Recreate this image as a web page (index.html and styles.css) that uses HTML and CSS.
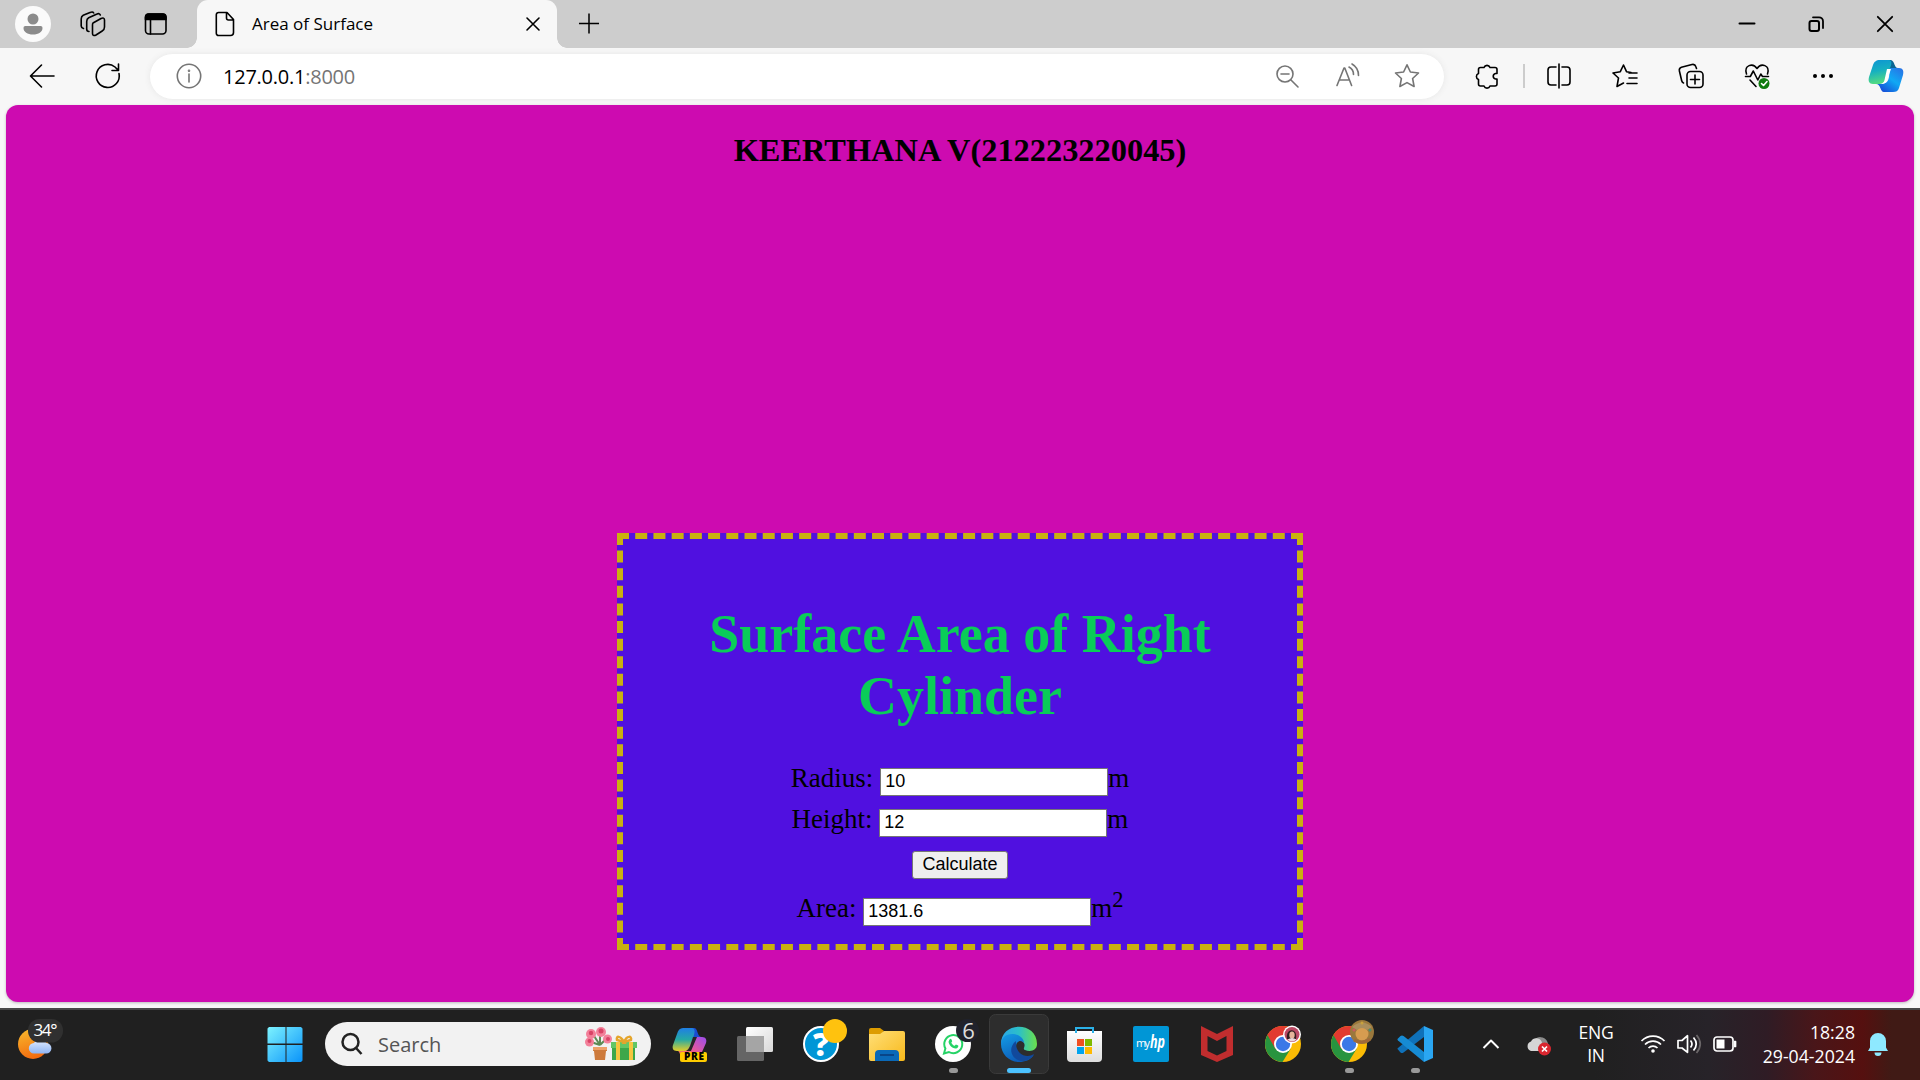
FILE: index.html
```html
<!DOCTYPE html>
<html lang="en">
<head>
<meta charset="utf-8">
<title>Area of Surface</title>
<link rel="stylesheet" href="styles.css">
</head>
<body>
<header class="tabstrip">
  <div class="tab-tools">
    <svg class="profile" viewBox="0 0 36 36"><circle cx="18" cy="18" r="18" fill="#fafafa"/><circle cx="18" cy="13" r="5.5" fill="#8b8b8b"/><path d="M10 20h16a1.8 1.8 0 0 1 1.5 2c0 4-4 6.500-9.500 6.500S8.500 26 8.500 22a1.800 1.800 0 0 1 1.500-2z" fill="#8b8b8b"/></svg>
    <svg class="icon workspaces" viewBox="0 0 26 26"><path d="M13 12l8-4.500c2-1 3.500-.5 3.500 1.500v7c0 2-.8 3.200-2.300 4L16 24c-2 1-3.500.5-3.500-1.500v-8.500c0-1 0-1.500.5-2zM9 20.500c-1.500 0-2.300-.8-2.300-2.500v-7.500c0-2 .5-2.800 2-3.700L17 3c1.500-.8 2.800-.4 3.300 1M3.500 17.500C2 17 1.200 16.300 1.200 15V8c0-2 .6-3 2-3.700L10 1.500c2-.8 3.200-.5 3.700.5"/></svg>
    <svg class="icon tab-actions" viewBox="0 0 24 24"><rect x="1.500" y="2" width="20.500" height="20" rx="3.500"/><path d="M6.500 7v15"/><path d="M1.500 7.500V5A3 3 0 0 1 4.500 2H19a3 3 0 0 1 3 3v2.500z" fill="#000"/></svg>
  </div>
  <div class="tab">
    <svg class="icon page-icon" viewBox="0 0 20 26"><path d="M3.500 1.500h8.500l6.500 7v13a3 3 0 0 1-3 3h-12a2.200 2.200 0 0 1-2.200-2.200V3.700a2.200 2.200 0 0 1 2.200-2.200zM11.500 1.500V7a2 2 0 0 0 2 2h5"/></svg>
    <span class="tab-title">Area of Surface</span>
    <svg class="icon tab-close" viewBox="0 0 14 14"><path d="M1 1l12 12M13 1L1 13"/></svg>
  </div>
  <svg class="icon new-tab" viewBox="0 0 22 22"><path d="M11 0.500v21M.5 11h21"/></svg>
  <div class="window-buttons">
    <svg class="icon" viewBox="0 0 16 16"><path d="M.5 7.500h15" stroke-width="2"/></svg>
    <svg class="icon" viewBox="0 0 16 16"><rect x="1.500" y="5" width="9.500" height="10" rx="2" stroke-width="2"/><path d="M5 1.300h6a4 4 0 0 1 4 4V12" stroke-width="1.800"/></svg>
    <svg class="icon" viewBox="0 0 16 16"><path d="M.8.8l14.400 14.400M15.200.8L.8 15.200" stroke-width="1.800"/></svg>
  </div>
</header>
<nav class="toolbar">
  <div class="nav-cell"><svg class="icon" viewBox="0 0 26 26"><path d="M25 13H2M12.500 2L1.500 13l11 11"/></svg></div>
  <div class="nav-cell"><svg class="icon" viewBox="0 0 26 26"><path d="M24 10.500A11.500 11.500 0 1 1 20 4l3 3M23.500 1v6.500H17"/></svg></div>
  <div class="address">
    <svg class="icon gray" viewBox="0 0 26 26"><circle cx="13" cy="13" r="11.700"/><path d="M13 11v8"/><circle cx="13" cy="7.700" r=".5"/></svg>
    <span class="url">127.0.0.1<span class="port">:8000</span></span>
    <svg class="icon gray zoom-out" viewBox="0 0 26 26"><circle cx="11" cy="11" r="8"/><path d="M17 17l7 7M7 11h8"/></svg>
    <svg class="icon gray read" viewBox="0 0 26 26"><path d="M2 22.500L9 5h.8l6.800 17.500M4.500 17h10M14 4c3 1.500 4.500 4 4.500 7.500M17 1c4.500 2.500 6.500 6 6.500 11.500"/></svg>
    <svg class="icon gray star" viewBox="0 0 26 26"><path d="M13 1.800l3.400 7.200 8.100 1-5.900 5.500 1.500 8L13 19.600l-7.100 3.900 1.500-8L1.500 10l8.100-1z"/></svg>
  </div>
  <div class="nav-cell puzzle"><svg class="icon" viewBox="0 0 26 26"><path d="M6.500 4.500H10a3.200 3.200 0 0 1 6 0h5a2 2 0 0 1 2 2v4h-1.500a2.800 2.800 0 0 0 0 5.500H23v5a2 2 0 0 1-2 2h-5a3.200 3.200 0 0 1-6 0H6.500a2 2 0 0 1-2-2v-4.500a3.200 3.200 0 0 1 0-6V6.500a2 2 0 0 1 2-2"/></svg></div>
  <i class="divider"></i>
  <div class="nav-cell"><svg class="icon" viewBox="0 0 26 26"><path d="M10 4H5a3 3 0 0 0-3 3v12a3 3 0 0 0 3 3h5M16 4h5a3 3 0 0 1 3 3v12a3 3 0 0 1-3 3h-5M13 1v24"/></svg></div>
  <div class="nav-cell"><svg class="icon" viewBox="0 0 26 26"><path d="M19 9.500l-4.500-.8L11.500 2 8.300 8.700 1 10l5.500 5-1.500 8.500 6.500-3.500M17 10h8M17 15h8M15 20.500h10"/></svg></div>
  <div class="nav-cell"><svg class="icon" viewBox="0 0 26 26"><rect x="9" y="8.500" width="16" height="16" rx="3.500"/><path d="M17 12v9M12.500 16.500h9M5.500 20c-1-.3-1.500-1-1.800-2.200L1.400 8c-.4-2 .4-3.300 2-3.800L14 1.500c2-.4 3.300.4 3.800 2L18.500 5.500"/></svg></div>
  <div class="nav-cell"><svg class="icon" viewBox="0 0 26 26"><path d="M2.500 11C-.5 2 9-.5 13 5.500 17-.5 26.500 2 23.500 11M1.500 13.500h4.800l3-5.500 4.500 9 3-6 1.700 2.500h6M6 17l6 6.500"/><circle cx="20" cy="20.500" r="5.500" fill="#107c10" stroke="none"/><path d="M17.500 20.500l2 2 3.500-4" stroke="#fff"/></svg></div>
  <div class="nav-cell"><svg class="icon" viewBox="0 0 26 26"><g fill="#000" stroke="none"><circle cx="5" cy="13" r="2"/><circle cx="13" cy="13" r="2"/><circle cx="21" cy="13" r="2"/></g></svg></div>
  <div class="nav-cell copilot"><svg viewBox="0 0 36 32">
    <defs>
      <linearGradient id="cpA" x1="0" y1="0" x2=".2" y2="1"><stop offset="0" stop-color="#0d93d4"/><stop offset=".5" stop-color="#16b0c0"/><stop offset="1" stop-color="#52da83"/></linearGradient>
      <linearGradient id="cpB" x1="1" y1="0" x2=".2" y2="1"><stop offset="0" stop-color="#2a6ee4"/><stop offset=".5" stop-color="#10a9f4"/><stop offset="1" stop-color="#1648d6"/></linearGradient>
    </defs>
    <path d="M14 0h9c4 1 3 8 7 8l-9 3z" fill="#0b6592"/>
    <path d="M22 8h9c4 0 5 3 4 7l-4 13c-1 3-3 4-6 4h-9c-4 0-3-8-8-8l8-1c3 0 4-2 5-6z" fill="url(#cpB)"/>
    <path d="M12 0h9c3 0 3 4 1 8l-4 12c-1 3-3 4-6 4H5c-4 0-5-3-4-7L5 5c1-3 3-5 7-5z" fill="url(#cpA)"/>
    <path d="M19 9h4l-4 11c-.8 2.500-2 4-5 4h-2c3-.5 4-2 4.500-4z" fill="#fff"/>
  </svg></div>
</nav>

<main class="page">
  <h2 class="author">KEERTHANA V(212223220045)</h2>
  <section class="box">
    <h1 class="box-title">Surface Area of Right Cylinder</h1>
    <form class="calc">
      <div class="row">Radius: <input type="text" value="10">m</div>
      <div class="row">Height: <input type="text" value="12">m</div>
      <div class="row button-row"><input type="button" value="Calculate"></div>
      <div class="row area-row">Area: <input type="text" value="1381.6">m<sup>2</sup></div>
    </form>
  </section>
</main>

<footer class="taskbar">
  <svg class="weather" viewBox="0 0 66 70">
    <defs><linearGradient id="sun" x1=".3" y1="0" x2=".6" y2="1"><stop offset="0" stop-color="#f8b52b"/><stop offset="1" stop-color="#f2680e"/></linearGradient>
    <linearGradient id="cld" x1="0" y1="0" x2="0" y2="1"><stop offset="0" stop-color="#e3edff"/><stop offset="1" stop-color="#8fb5f3"/></linearGradient></defs>
    <circle cx="33" cy="34" r="15" fill="url(#sun)"/>
    <path d="M34 43.500a5.200 5.200 0 0 1 0-10.400 7 7 0 0 1 12.500 0A5.200 5.200 0 0 1 46 43.500z" fill="url(#cld)"/>
    <rect x="28" y="9" width="35" height="23.500" rx="11.500" fill="#303030"/>
    <text x="33.500" y="26" class="temp" textLength="24">34°</text>
  </svg>
  <svg class="start" viewBox="0 0 66 70"><defs><linearGradient id="win" x1="0" y1="0" x2="1" y2="1"><stop offset="0" stop-color="#7df3ff"/><stop offset="1" stop-color="#0a93f9"/></linearGradient></defs><path fill="url(#win)" d="M17 17h16.500v16.500H15.500V18.500zM34.500 17H49l1.500 1.500v15h-16zM15.500 35h18v17H17l-1.500-1.500zM34.500 35h16v15.500L49 52H34.500z"/></svg>
  <div class="search">
    <svg class="mag" viewBox="0 0 24 24"><circle cx="10.500" cy="10" r="8"/><path d="M16 16l5.500 6"/></svg>
    <span class="search-label">Search</span>
    <svg class="gift" viewBox="0 0 52 34">
      <path d="M15 18L9 9M15 18V6M15 18l7-7M15 18L6 15" stroke="#5c8a54" stroke-width="2"/>
      <g fill="#f3809a"><circle cx="6" cy="7" r="5"/><circle cx="16" cy="5" r="5"/><circle cx="22.500" cy="12" r="4.500"/><circle cx="4.500" cy="15" r="4.500"/></g>
      <g fill="#d94367"><circle cx="6" cy="6" r="2.200"/><circle cx="16" cy="4" r="2.500"/><circle cx="23" cy="12" r="2"/><circle cx="4.500" cy="14" r="2"/></g>
      <path d="M8 20h14v4h-1l-1 9H10L9 24H8z" fill="#cd7a3b"/><path d="M8 20h14v3H8z" fill="#eda168"/>
      <rect x="27" y="20" width="23" height="13" fill="#3da74a"/><rect x="26" y="15" width="26" height="6" fill="#62c666"/>
      <path d="M31 15h4v18h-4zM44 15h4v18h-4z" fill="#f6c63f"/><path d="M39 15c-4-7-8-6-7-2zM39 15c3-7 8-6 7-2z" fill="none" stroke="#e5a52c" stroke-width="2.500"/>
    </svg>
  </div>
  <div class="apps">
    <svg viewBox="0 0 66 70"><defs><linearGradient id="pa" x1="0" y1="0" x2="0" y2="1"><stop offset="0" stop-color="#1f7ee5"/><stop offset=".5" stop-color="#25a9a5"/><stop offset="1" stop-color="#e5ce27"/></linearGradient><linearGradient id="pb" x1="1" y1="0" x2="0" y2="1"><stop offset="0" stop-color="#9a4df0"/><stop offset=".6" stop-color="#ed5a91"/><stop offset="1" stop-color="#f78b3a"/></linearGradient></defs>
      <path d="M30 18h8c4 0 3 8 7 9l-9 3z" fill="#1a4bd0"/><path d="M37 27h9c4 0 5 3 4 6l-4 9c-1 3-3 5-7 5H27c-3 0-3-5-5-6h4c4 0 5-2 6-5z" fill="url(#pb)"/><path d="M27 18h9c3 0 3 4 2 7l-4 11c-1 3-3 5-6 5h-7c-4 0-5-3-4-6l4-11c1-4 3-6 6-6z" fill="url(#pa)"/><path d="M37 27l4 0-6 14h-5c2-1 3-3 4-5z" fill="#262626"/>
      <rect x="24" y="42" width="27" height="10" rx="2" fill="#fc0"/><text x="28" y="50.400" class="pre" textLength="20">PRE</text></svg>
    <svg viewBox="0 0 66 70"><defs><linearGradient id="tv" x1="0" y1="0" x2="1" y2="1"><stop offset="0" stop-color="#fff"/><stop offset="1" stop-color="#d8d8d8"/></linearGradient></defs><rect x="24" y="17" width="27" height="25" rx="1.500" fill="url(#tv)"/><rect x="15" y="26" width="27" height="25" rx="1.500" fill="#777" fill-opacity=".8"/><path d="M24 26h18v16H24z" fill="#a5a5a5"/></svg>
    <svg viewBox="0 0 66 70"><circle cx="33" cy="34" r="17" fill="#0096d6" stroke="#fff" stroke-width="2"/><text x="33" y="46" class="question">?</text><circle cx="47" cy="21" r="12" fill="#ffc20e"/></svg>
    <svg viewBox="0 0 66 70"><defs><linearGradient id="fd" x1="0" y1="0" x2="1" y2="1"><stop offset="0" stop-color="#ffdf78"/><stop offset="1" stop-color="#f8b91b"/></linearGradient></defs><path d="M15 20a2 2 0 0 1 2-2h9l4 3-3 4H15z" fill="#dd9c00"/><path d="M15 24h11l4-3h19a2 2 0 0 1 2 2v26a2 2 0 0 1-2 2H17a2 2 0 0 1-2-2z" fill="url(#fd)"/><path d="M21 51v-7a4 4 0 0 1 4-4h16a4 4 0 0 1 4 4v7z" fill="#0a69b8"/><path d="M26 45h14" stroke="#0a3f80" stroke-width="1.700"/></svg>
    <svg viewBox="0 0 66 70"><circle cx="33" cy="34" r="18" fill="#fff"/><path d="M24 43.500l1.400-5a9 9 0 1 1 3.500 3.500z" fill="none" stroke="#25d366" stroke-width="2"/><path d="M29.500 29.500c.8-1 1.700-.8 2 0l.7 1.800-.9 1.400c.8 1.600 2 2.600 3.400 3.100l1.200-1.200 2.300 1c.5.700-.2 2.500-2 2.900-4 .5-8-4.500-7.600-7z" fill="#25d366"/><circle cx="47.500" cy="20.500" r="11.500" fill="#20222c"/><text x="48.500" y="28.500" class="count">6</text><rect x="29" y="58" width="9" height="5" rx="2.500" fill="#999"/></svg>
    <svg viewBox="0 0 66 70"><defs><linearGradient id="ea" x1="0" y1=".5" x2="1" y2=".5"><stop offset="0" stop-color="#2aa5e8"/><stop offset=".5" stop-color="#2cc0c8"/><stop offset="1" stop-color="#6be04a"/></linearGradient><linearGradient id="eb" x1="0" y1="0" x2=".5" y2="1"><stop offset="0" stop-color="#149de6"/><stop offset="1" stop-color="#0c59b5"/></linearGradient></defs><rect x="3.500" y="4.500" width="59" height="59" rx="6" fill="#2d2d2d" stroke="#3a3a3a"/>
      <path d="M15 34c0-23 36-23 36 0 0 7-7 8-12 6-3-1 1-3-1-7-3-6-18-6-23 1z" fill="url(#ea)"/><path d="M15 34c0-6 5-10 11-10 8 0 12 5 12 9-3-4-8-2-8 4 0 7 9 15 18 8-4 5-9 7-15 7-10 0-18-8-18-18z" fill="url(#eb)"/><path d="M30 31c-10 8-3 21 8 20 5-1 9-4 10-7-8 5-19 0-18-13z" fill="#11499c"/><rect x="21" y="58" width="24" height="5" rx="2.500" fill="#4cc2ff"/></svg>
    <svg viewBox="0 0 66 70"><defs><linearGradient id="st" x1="0" y1="0" x2="0" y2="1"><stop offset="0" stop-color="#fff"/><stop offset="1" stop-color="#ddd"/></linearGradient></defs><path d="M15 21h35v27a4 4 0 0 1-4 4H19a4 4 0 0 1-4-4z" fill="url(#st)"/><path d="M24 23v-5h17v5" fill="none" stroke="#2bb1e8" stroke-width="2"/><path d="M25 29h7v7h-7z" fill="#f25022"/><path d="M33 29h7v7h-7z" fill="#7fba00"/><path d="M25 37h7v7h-7z" fill="#00a4ef"/><path d="M33 37h7v7h-7z" fill="#ffb900"/></svg>
    <svg viewBox="0 0 66 70"><rect x="15" y="16" width="36" height="36" rx="2" fill="#0096d6"/><text x="18" y="36.500" class="my" textLength="14">my</text><text x="32" y="38" class="hp" textLength="15" lengthAdjust="spacingAndGlyphs">hp</text></svg>
    <svg viewBox="0 0 66 70"><path d="M17 16l16 8 16-8v29l-16 7-16-7zM23.500 26v15l9.500 4.500 9.500-4.500V26L33 31z" fill="#c12d2e" fill-rule="evenodd"/></svg>
    <svg viewBox="0 0 66 70"><g id="chrome"><circle cx="33" cy="34" r="18" fill="#fbbc05"/><path d="M33 34L17.500 25A18 18 0 0 0 32.500 52l8-13z" fill="#28943f"/><path d="M17.400 25A18 18 0 0 1 48.600 25H33l-7.500 14z" fill="#e23a30"/><circle cx="33" cy="34" r="9" fill="#fff"/><circle cx="33" cy="34" r="7.200" fill="#3b78e7"/></g><circle cx="42" cy="24.500" r="9" fill="#fff"/><circle cx="42" cy="24.500" r="7.500" fill="#ba4964"/><path d="M37 29c-2-11 11-12 9 0z" fill="#321e20"/><ellipse cx="42" cy="25" rx="2.700" ry="3.500" fill="#e5b49b"/><path d="M37.500 29.500q4.500-3 9 0-4.500 4-9 0z" fill="#e9d9dc"/></svg>
    <svg viewBox="0 0 66 70"><use href="#chrome"/><circle cx="46" cy="22" r="12" fill="#9a783c"/><circle cx="46" cy="24" r="6.500" fill="#d79c50"/><path d="M36 17q10-9 20 0l-5 3q-5-4-10 0z" fill="#aa8e5c"/><path d="M38 30q8 5 16-1" stroke="#a0693a" stroke-width="3" fill="none"/><circle cx="38" cy="20" r="1.500" fill="#c95a60"/><circle cx="54" cy="20" r="1.500" fill="#4a8c74"/><circle cx="46" cy="13" r="1.500" fill="#c9a23c"/></svg>
    <svg viewBox="0 0 66 70"><path d="M15.500 39l3 3.500c1 .7 2 .7 3 0L42 27V16L16 38c-.5.500-.7.700-.5 1z" fill="#0f71b9"/><path d="M15.500 29l3-3c1-.7 2-.7 3 0L42 42v10L16 30.500c-.5-.5-.7-1-.5-1.500z" fill="#168bd4"/><path d="M42 16l9 4v28l-9 4z" fill="#2aa6f2"/><rect x="29" y="58" width="9" height="5" rx="2.500" fill="#999"/><rect x="-37" y="58" width="9" height="5" rx="2.500" fill="#999"/></svg>
  </div>
  <div class="tray">
    <svg class="tray-icon chevron" viewBox="0 0 24 24"><path d="M4.500 16L12 8.500l7.500 7.500" stroke-width="2"/></svg>
    <svg class="tray-icon cloud" viewBox="0 0 26 26"><path d="M8 9a8 8 0 0 1 13 1l2 5H8z" fill="#8b8b8b" stroke="none"/><path d="M5 20a5 5 0 0 1 0-9.500 6 6 0 0 1 11 1L14 20z" fill="#d5d5d5" stroke="none"/><circle cx="18.500" cy="18" r="6.500" fill="#d9262f" stroke="none"/><path d="M16 15.500l5 5M21 15.500l-5 5" stroke-width="1.700"/></svg>
    <div class="lang">ENG<br>IN</div>
    <svg class="tray-icon wifi" viewBox="0 0 26 26"><path d="M1.500 10a16 16 0 0 1 23 0M5 13.500a11.300 11.300 0 0 1 16 0M8.500 17a6.500 6.500 0 0 1 9 0"/><circle cx="13" cy="20" r="1.800" fill="#fff" stroke="none"/></svg>
    <svg class="tray-icon" viewBox="0 0 26 26"><path d="M2 9.500h4l5.500-4.800v16.600L6 17H2zM14.500 9.500q3 3.500 0 7M17.500 6.500q5.500 6.500 0 13"/><path d="M20.500 4q7.500 9 0 18" stroke="#6a6668"/></svg>
    <svg class="tray-icon" viewBox="0 0 26 26"><rect x="2" y="6" width="19" height="14" rx="3"/><path d="M22 10.500h1.500v5H22" fill="#fff"/><path d="M4.500 8.500h8v9h-8z" fill="#fff" stroke="none"/></svg>
    <div class="clock">18:28<br>29-04-2024</div>
    <svg class="tray-icon bell" viewBox="0 0 26 26"><path d="M5 10a8 8 0 0 1 16 0v6.500l2 3.500H3l2-3.500zM9.500 21.500h7a3.500 3.500 0 0 1-7 0z" fill="#8ee9ff" stroke="none"/></svg>
  </div>
</footer>
</body>
</html>
```
FILE: styles.css
```css
* { box-sizing: border-box; }
body {
  margin: 0;
  width: 1920px;
  height: 1080px;
  overflow: hidden;
  display: flex;
  flex-direction: column;
  background: #f7f7f7;
  font-family: "Open Sans", "Noto Sans", sans-serif;
  color: #000;
}
svg { display: block; flex: none; overflow: visible; }
.icon { fill: none; stroke: #000; stroke-width: 1.6; stroke-linecap: round; stroke-linejoin: round; width: 26px; height: 26px; }
.gray { stroke: #757575; }

/* Tab strip */
.tabstrip { flex: none; height: 48px; display: flex; align-items: center; background: #cdcdcd; }
.tab-tools { display: flex; align-items: center; width: 197px; padding-left: 15px; height: 48px; }
.profile { width: 36px; height: 36px; }
.workspaces { margin-left: 29px; }
.tab-actions { width: 24px; height: 24px; margin-left: 38px; }
.tab { position: relative; width: 360px; height: 48px; padding: 0 17px 0 18px; display: flex; align-items: center; background: #f7f7f7; border-radius: 11px 11px 0 0; }
.tab::before, .tab::after { content: ""; position: absolute; bottom: 0; width: 10px; height: 10px; }
.tab::before { left: -10px; background: radial-gradient(circle at 0 0, #cdcdcd 9.5px, #f7f7f7 10px); }
.tab::after { right: -10px; background: radial-gradient(circle at 100% 0, #cdcdcd 9.5px, #f7f7f7 10px); }
.page-icon { width: 20px; }
.tab-title { margin-left: 17px; padding-bottom: 2px; font-size: 17px; letter-spacing: 0; white-space: nowrap; }
.tab-close { width: 14px; height: 14px; margin-left: auto; }
.new-tab { width: 22px; height: 22px; margin-left: 21px; padding-bottom: 1px; stroke-linecap: butt; }
.window-buttons { display: flex; gap: 53px; margin-left: auto; padding: 0 27px 1px 0; }
.window-buttons .icon { width: 16px; height: 16px; }

/* Toolbar */
.toolbar { flex: none; height: 57px; display: flex; align-items: center; padding: 0 0 1px 9px; }
.nav-cell { width: 66px; flex: none; display: flex; justify-content: center; }
.address { flex: none; width: 1294px; height: 45px; margin-left: 9px; padding: 0 24px 0 26px; display: flex; align-items: center; background: #fff; border-radius: 23px; box-shadow: 0 0 6px #e6e6e6; }
.url { margin-left: 21px; font-size: 20px; letter-spacing: -0.24px; }
.port { color: #757575; }
.zoom-out { margin-left: auto; }
.read { margin-left: 35px; }
.star { margin-left: 33px; }
.puzzle { margin-left: 10px; }
.divider { flex: none; width: 2px; height: 24px; margin: 0 1px 0 3px; background: #ccc; }
.copilot svg { width: 36px; height: 32px; }
.copilot { margin-left: -3px; }

/* Page content */
.page { flex: none; width: 1908px; height: 897px; margin: 0 6px; display: flow-root; background: #cd0bb0; border-radius: 12px; box-shadow: 0 1px 3px #bbb; font-family: "Liberation Serif", "Times New Roman", serif; }
.author { margin: 27px 0 0; font-size: 32.4px; line-height: 37px; text-align: center; }
.box { width: 686px; height: 417px; margin: 364px auto 0; padding: 64px 54px 0; border: 6px dashed #c9b10f; background: #5010e0; text-align: center; }
.box-title { margin: 0; font-size: 54px; line-height: 62px; color: #0acd58; }
.calc { font-size: 27px; margin-top: 36px; }
.row { height: 41px; line-height: 31px; white-space: nowrap; }
.row input { font-family: "Liberation Sans", Arial, sans-serif; font-size: 18px; line-height: 21px; color: #000; }
.row input[type="text"] { width: 228px; height: 28px; padding: 1px 4px; border: 1px solid #767676; border-radius: 0; background: #fff; }
.row input[type="button"] { width: 96px; height: 28px; padding: 0; border: 1px solid #767676; border-radius: 3px; background: #efefef; }
.button-row { height: 48px; padding-top: 1px; }
.row sup { font-size: 22.5px; line-height: 0; }

/* Taskbar */
.taskbar { flex: none; height: 72px; margin-top: 6px; border-top: 2px solid #484848; display: flex; background: linear-gradient(90deg, #202020 0, #202020 83%, #272329 89%, #2f1c25 92%, #491619 94.5%, #55100f 97%, #401a15 98.5%); color: #fff; }
.taskbar svg { width: 66px; height: 70px; }
.temp { font-size: 17px; fill: #fff; }
.start { margin-left: 186px; }
.taskbar .search { width: 326px; height: 44px; margin: 12px 5px 0 7px; padding: 0 14px 0 15px; display: flex; align-items: center; background: #f2f2f2; border-radius: 22px; }
.taskbar .mag { width: 24px; height: 24px; fill: none; stroke: #222; stroke-width: 2.5; }
.search-label { margin-left: 14px; font-size: 20px; color: #555; }
.taskbar .gift { width: 52px; height: 34px; margin-left: auto; }
.apps { display: flex; }
.pre { font: 800 10px "Open Sans", sans-serif; fill: #000; }
.question { font: 800 32px "Open Sans", sans-serif; fill: #fff; text-anchor: middle; }
.count { font-size: 22px; fill: #ddd; text-anchor: middle; }
.my { font-size: 11px; fill: #fff; }
.hp { font: italic 700 17px "Open Sans", sans-serif; fill: #fff; }
.tray { display: flex; align-items: center; margin-left: 31px; height: 68px; }
.taskbar .tray-icon { width: 26px; height: 26px; fill: none; stroke: #fff; stroke-width: 1.7; stroke-linejoin: round; margin-right: 10px; }
.taskbar .chevron { width: 24px; height: 24px; margin-right: 23px; }
.taskbar .cloud { margin-right: 0; }
.lang { width: 60px; margin-left: 14px; text-align: center; font-size: 17.5px; line-height: 23px; letter-spacing: -0.2px; }
.taskbar .wifi { margin-left: 14px; }
.clock { width: 107px; text-align: right; font-size: 17.7px; line-height: 24px; white-space: nowrap; }
.taskbar .bell { margin: 0 0 0 10px; }
```
